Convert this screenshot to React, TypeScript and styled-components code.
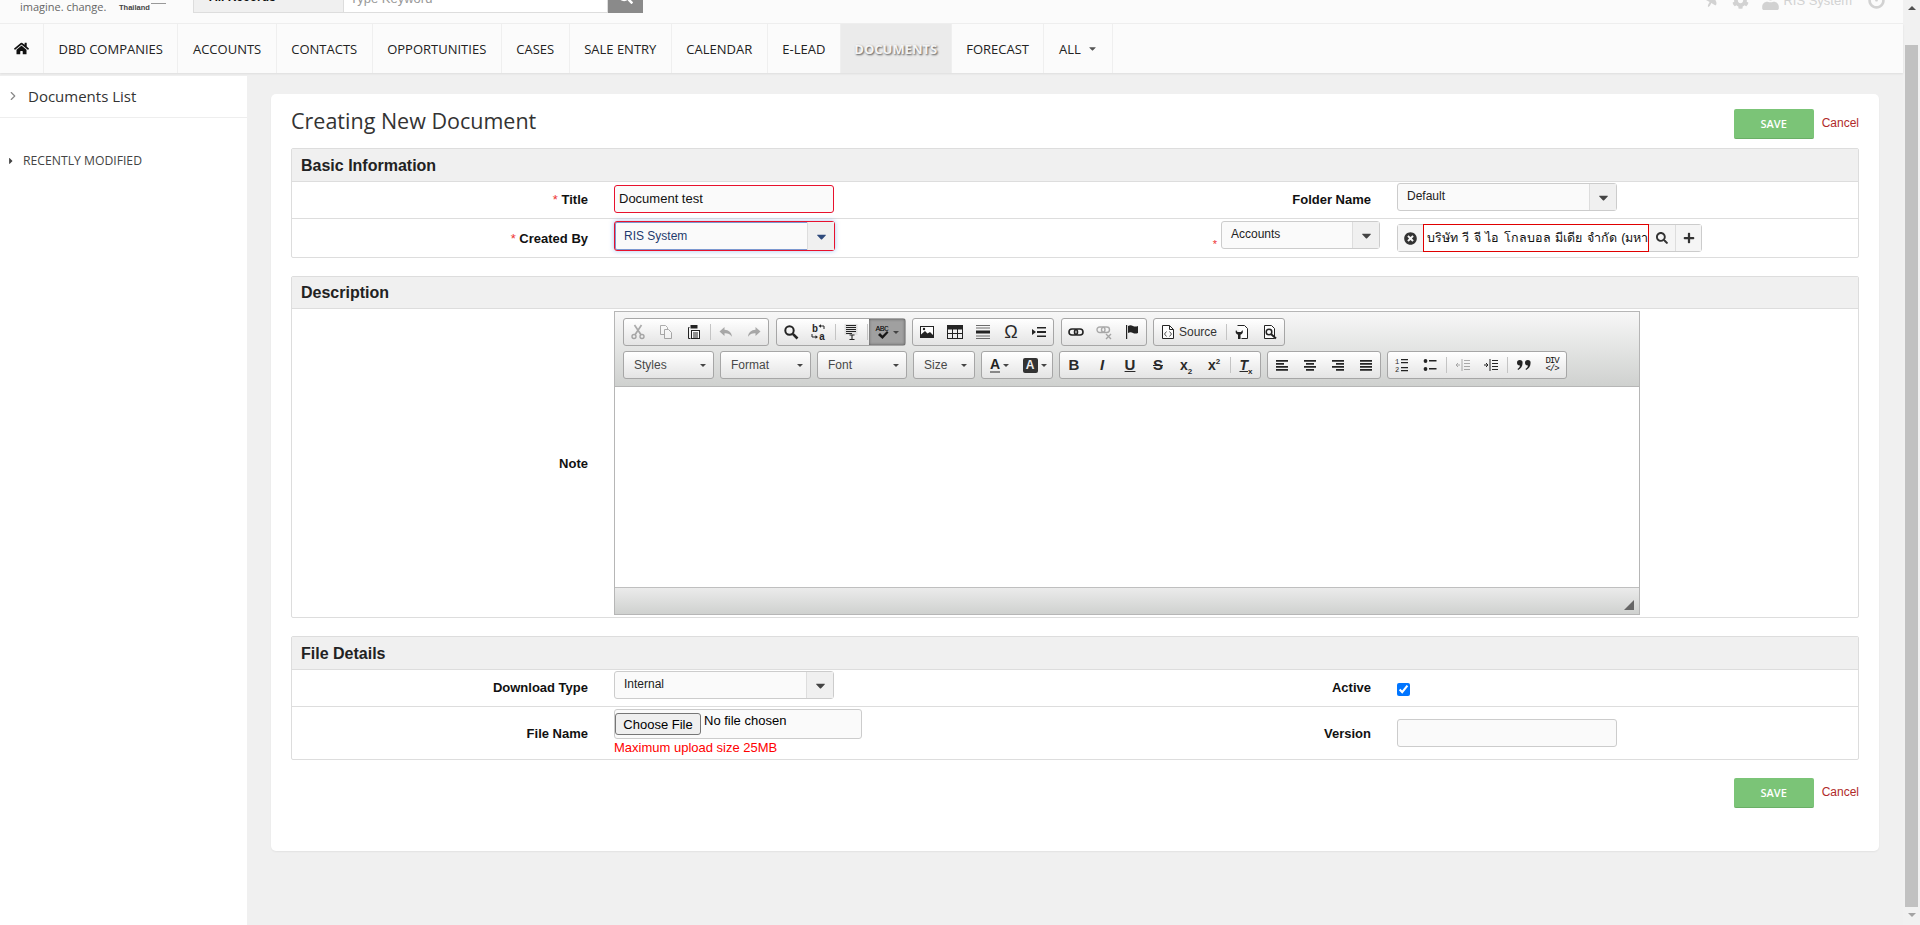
import React from "react";
import styled, { createGlobalStyle } from "styled-components";
import {
  FaCaretDown,
  FaCaretRight,
  FaCog,
  FaHome,
  FaPlus,
  FaPowerOff,
  FaSearch,
  FaThumbtack,
  FaTimesCircle,
  FaUser,
} from "react-icons/fa";
import { FiChevronRight } from "react-icons/fi";

const GlobalStyle = createGlobalStyle`
  html, body { margin: 0; padding: 0; height: 100%; overflow: hidden; }
  body { font-family: "Liberation Sans", Arial, sans-serif; background: #f0f0f0; color: #111; }
  * { box-sizing: border-box; }
`;

const navItems = [
  "DBD Companies",
  "Accounts",
  "Contacts",
  "Opportunities",
  "Cases",
  "Sale Entry",
  "Calendar",
  "E-Lead",
  "Documents",
  "Forecast",
];

// ckeditor toolbar icons, all on a 16px grid
const icons: any = {
  cut: (
    <g fill="none" stroke="#000" strokeWidth="1.4">
      <circle cx="4" cy="12.5" r="2" />
      <circle cx="12" cy="12.5" r="2" />
      <path d="M5 10.8 11.5 1M11 10.8 4.5 1" strokeWidth="1.7" />
    </g>
  ),
  copy: (
    <g fill="#fff" stroke="#000" strokeWidth="1">
      <path d="M2.5 1.5h5l2 2v7h-7z" />
      <path d="M6.5 5.5h4l3 3v6h-7z" />
    </g>
  ),
  paste: (
    <g fill="none" stroke="#000">
      <path d="M3.5 3.5h-1v11h2" strokeLinejoin="round" />
      <rect x="4.500" y="1" width="7" height="3.5" fill="#000" stroke="none" />
      <rect x="5.5" y="6.5" width="8" height="8" fill="#fff" />
      <path d="M7 9h5M7 11h5M7 13h5" />
    </g>
  ),
  undo: <path d="M6.5 3 1.5 7.5l5 4.5V9.2c3.2-.2 5.6.8 7.5 3.6-.4-4.3-3.2-6.8-7.5-7z" />,
  redo: <path d="M9.5 3l5 4.5-5 4.5V9.2c-3.2-.2-5.6.8-7.5 3.6.4-4.3 3.2-6.8 7.5-7z" />,
  find: (
    <g fill="none" stroke="#000">
      <circle cx="6.5" cy="6.5" r="4.2" strokeWidth="2" />
      <path d="M9.8 9.8 14.5 14.5" strokeWidth="2.6" />
    </g>
  ),
  replace: (
    <g>
      <text x="1" y="8" fontSize="10" fontWeight="700" fontFamily="Liberation Mono">b</text>
      <text x="8" y="15.5" fontSize="10" fontWeight="700" fontFamily="Liberation Mono">a</text>
      <path d="M9 2h4v3M1 10v3h4" fill="none" stroke="#000" />
      <path d="M7.5 2 10 .2v3.6zM7 13l-2.5-1.800v3.600z" />
    </g>
  ),
  selectAll: (
    <g>
      <path d="M1.5 0h13v11h-13z" fill="#ddd" />
      <path d="M3 1.5h10M3 3.5h10M3 5.5h10M3 7.5h10M3 9.5h6" stroke="#000" />
      <path d="M6.5 11h5M6.5 15.5h5M9 11v4.5" stroke="#000" strokeWidth="1.1" fill="none" />
    </g>
  ),
  image: (
    <g>
      <rect x="1.500" y="2.500" width="13" height="11" fill="#fff" stroke="#000" />
      <path d="M2 13V10.5L6 7l2.5 2.5L11 8l3 3v2z" />
      <circle cx="5" cy="5" r="1.2" />
    </g>
  ),
  table: (
    <g fill="none" stroke="#000">
      <rect x="0.5" y="1.5" width="15" height="13" />
      <path d="M0 2h16v3H0z" fill="#000" />
      <path d="M.5 9.5h15M5.5 5v9M10.5 5v9" />
    </g>
  ),
  hr: (
    <g>
      <path d="M1 1h14v1H1zM1 3.5h14v1H1zM1 11.5h14v1H1zM1 14h14v1H1z" fill="#555" />
      <path d="M1 6.5h14v3H1z" />
    </g>
  ),
  pagebreak: (
    <g>
      <path d="M1 5v6l4-3z" />
      <path d="M6 3h9v1.5H6zM6 7h9v2H6zM6 11.5h9V13H6z" />
    </g>
  ),
  link: (
    <g fill="none" stroke="#000" strokeWidth="1.6">
      <rect x="1" y="5" width="8.5" height="6" rx="3" />
      <rect x="6.5" y="5" width="8.5" height="6" rx="3" />
    </g>
  ),
  unlink: (
    <g fill="none" stroke="#000" strokeWidth="1.4">
      <rect x="1" y="3" width="8" height="5.5" rx="2.7" />
      <rect x="5.5" y="3" width="8" height="5.5" rx="2.7" />
      <path d="M10 10l5 5M15 10l-5 5" />
    </g>
  ),
  anchor: (
    <g>
      <path d="M2 1h1.2v14H2z" />
      <path d="M4 2c2-1 3.500-.7 5 0s3 .7 5 0v7c-2 .7-3.500.7-5 0s-3-1-5 0z" />
    </g>
  ),
  source: (
    <g>
      <path d="M2.500 1.500h7l4 4v9h-11z" fill="#fff" stroke="#000" />
      <path d="M9.500 1.500v4h4" fill="none" stroke="#000" />
      <path d="M6.500 7.500 4.500 10l2 2.500M9.500 7.500l2 2.500-2 2.500" fill="none" stroke="#333" />
    </g>
  ),
  templates: (
    <g>
      <path d="M3.500 1.500h7l3 3v10h-6" fill="#fff" stroke="#000" />
      <path d="M2 6c-1 2.500 0 4 2 4.800V15h2.500v-4.200c2-.8 3-2.300 2-4.800L7 8H3.500z" />
    </g>
  ),
  preview: (
    <g fill="none" stroke="#000">
      <path d="M2.500 1.500h7l3 3v10h-10z" fill="#fff" />
      <circle cx="7" cy="8" r="2.800" strokeWidth="1.500" />
      <path d="M9 10l5 4.500" strokeWidth="2" />
    </g>
  ),
  left: <path d="M2 3h12v1.700H2zM2 6h8v1.700H2zM2 9h12v1.700H2zM2 12h12v1.700H2z" />,
  center: <path d="M2 3h12v1.700H2zM4 6h8v1.700H4zM2 9h12v1.700H2zM4 12h8v1.700H4z" />,
  right: <path d="M2 3h12v1.700H2zM6 6h8v1.700H6zM2 9h12v1.700H2zM6 12h8v1.700H6z" />,
  justify: <path d="M2 3h12v1.700H2zM2 6h12v1.700H2zM2 9h12v1.700H2zM2 12h12v1.700H2z" />,
  numbered: (
    <g>
      <text x="1" y="7" fontSize="7" fontFamily="Liberation Mono">1</text>
      <text x="1" y="15" fontSize="7" fontFamily="Liberation Mono">2</text>
      <path d="M7 2h7v1.200H7zM7 5h7v1.200H7zM7 10h7v1.200H7zM7 13h7v1.200H7z" />
    </g>
  ),
  bulleted: (
    <g>
      <circle cx="3.500" cy="4" r="1.900" />
      <circle cx="3.500" cy="12" r="1.900" />
      <path d="M7 3h7.500v1.500H7zM7 11h7.500v1.500H7z" />
    </g>
  ),
  outdent: (
    <g>
      <path d="M7 2v12" stroke="#000" />
      <path d="M9 3h6v1H9zM9 6h6v1H9zM9 9h6v1H9zM9 12h6v1H9z" />
      <path d="M1 8h4M1 8l2-2M1 8l2 2" stroke="#000" fill="none" />
    </g>
  ),
  indent: (
    <g>
      <path d="M7 2v12" stroke="#000" />
      <path d="M9 3h6v1H9zM9 6h6v1H9zM9 9h6v1H9zM9 12h6v1H9z" />
      <path d="M1 8h4M5 8l-2-2M5 8l-2 2" stroke="#000" fill="none" />
    </g>
  ),
  quote: (
    <g>
      <path d="M1 5.800a2.800 2.800 0 1 1 5.600 0c0 3.500-1.800 6-4.500 7.200l-.6-1c1.500-.8 2.300-2 2.500-3.500A2.800 2.800 0 0 1 1 5.800z" />
      <path d="M9 5.800a2.800 2.800 0 1 1 5.600 0c0 3.500-1.800 6-4.500 7.200l-.6-1c1.500-.8 2.300-2 2.500-3.500A2.800 2.800 0 0 1 9 5.800z" />
    </g>
  ),
  check: <path d="M3 11l2-2 2.500 2.500L12 7l1.500 1.500L7.500 15z" />,
};

const Icon = ({ name, off }: { name: string; off?: boolean }) => (
  <svg width="16" height="16" viewBox="0 0 16 16" opacity={off ? 0.3 : 0.85}>
    {icons[name]}
  </svg>
);

const Btn = ({ name, off }: { name: string; off?: boolean }) => (
  <ToolBtn>
    <Icon name={name} off={off} />
  </ToolBtn>
);

const App = () => {
  return (
    <Page>
      <GlobalStyle />
      <Main>
        <TopBar>
          <Brand>
            <Slogan>imagine. change.</Slogan>
            <Country>Thailand</Country>
            <BrandDash />
          </Brand>
          <SearchBox>
            <SearchScope>
              All Records
              <FaCaretDown size={9} color="#777" />
            </SearchScope>
            <SearchInput>Type Keyword</SearchInput>
            <SearchButton>
              <FaSearch size={15} color="#fff" />
            </SearchButton>
          </SearchBox>
          <UserTools>
            <Pin>
              <FaThumbtack size={16} />
            </Pin>
            <FaCog size={17} />
            <FaUser size={19} />
            <UserName>RIS System</UserName>
            <FaPowerOff size={17} />
          </UserTools>
        </TopBar>

        <Nav>
          <NavHome>
            <FaHome size={15} color="#111" />
          </NavHome>
          {navItems.map((el) => (
            <NavItem key={el} $active={el === "Documents"}>
              {el}
            </NavItem>
          ))}
          <NavItem>
            All
            <FaCaretDown size={11} color="#555" />
          </NavItem>
        </Nav>

        <Body>
          <Sidebar>
            <SideHead>
              <FiChevronRight size={14} color="#888" />
              Documents List
            </SideHead>
            <SideSub>
              <FaCaretRight size={10} color="#444" />
              Recently Modified
            </SideSub>
          </Sidebar>

          <Content>
            <Card>
              <TitleRow>
                <PageTitle>Creating New Document</PageTitle>
                <Actions>
                  <SaveButton>Save</SaveButton>
                  <CancelLink>Cancel</CancelLink>
                </Actions>
              </TitleRow>

              <Section>
                <SectionHead>Basic Information</SectionHead>
                <Row $h={37}>
                  <Label $up>
                    <Star>*</Star> Title
                  </Label>
                  <Cell>
                    <TextInput $invalid $up={2} defaultValue="Document test" />
                  </Cell>
                  <Label $up>Folder Name</Label>
                  <Cell>
                    <Select $w={220} $up={6}>
                      <span>Default</span>
                      <SelectArrow>
                        <FaCaretDown size={15} color="#444" />
                      </SelectArrow>
                    </Select>
                  </Cell>
                </Row>
                <Row $h={38}>
                  <Label>
                    <Star>*</Star> Created By
                  </Label>
                  <Cell>
                    <Select $w={221} $up={4} $invalid>
                      <span>RIS System</span>
                      <SelectArrow>
                        <FaCaretDown size={15} color="#2f4a7c" />
                      </SelectArrow>
                    </Select>
                  </Cell>
                  <RelatedCell>
                    <SmallStar>*</SmallStar>
                    <Select $w={159} $up={6}>
                      <span>Accounts</span>
                      <SelectArrow>
                        <FaCaretDown size={15} color="#444" />
                      </SelectArrow>
                    </Select>
                  </RelatedCell>
                  <Cell>
                    <Lookup>
                      <LookupAddon>
                        <FaTimesCircle size={13} color="#333" />
                      </LookupAddon>
                      <LookupValue>บริษัท วี จี ไอ โกลบอล มีเดีย จำกัด (มหาชน)</LookupValue>
                      <LookupAddon>
                        <FaSearch size={12} color="#333" />
                      </LookupAddon>
                      <LookupAddon>
                        <FaPlus size={12} color="#333" />
                      </LookupAddon>
                    </Lookup>
                  </Cell>
                </Row>
              </Section>

              <Section>
                <SectionHead $h={32}>Description</SectionHead>
                <EditorRow>
                  <Label>Note</Label>
                  <Editor>
                    <Toolbar>
                      <ToolRow $gap={6.5}>
                        <ToolGroup>
                          <Btn name="cut" off />
                          <Btn name="copy" off />
                          <Btn name="paste" />
                          <ToolSep />
                          <Btn name="undo" off />
                          <Btn name="redo" off />
                        </ToolGroup>
                        <ToolGroup>
                          <Btn name="find" />
                          <Btn name="replace" />
                          <ToolSep />
                          <Btn name="selectAll" />
                          <ToolSep />
                          <SpellBtn>
                            <SpellMark>
                              <SpellText>ABC</SpellText>
                              <Icon name="check" />
                            </SpellMark>
                            <MiniCaret />
                          </SpellBtn>
                        </ToolGroup>
                        <ToolGroup>
                          <Btn name="image" />
                          <Btn name="table" />
                          <Btn name="hr" />
                          <ToolBtn>
                            <Glyph $size={18}>Ω</Glyph>
                          </ToolBtn>
                          <Btn name="pagebreak" />
                        </ToolGroup>
                        <ToolGroup>
                          <Btn name="link" />
                          <Btn name="unlink" off />
                          <Btn name="anchor" />
                        </ToolGroup>
                        <ToolGroup>
                          <SourceBtn>
                            <Icon name="source" />
                            Source
                          </SourceBtn>
                          <ToolSep />
                          <Btn name="templates" />
                          <Btn name="preview" />
                        </ToolGroup>
                      </ToolRow>
                      <ToolRow $gap={6}>
                        <Combo $w={91}>
                          Styles
                          <MiniCaret />
                        </Combo>
                        <Combo $w={91}>
                          Format
                          <MiniCaret />
                        </Combo>
                        <Combo $w={90}>
                          Font
                          <MiniCaret />
                        </Combo>
                        <Combo $w={62}>
                          Size
                          <MiniCaret />
                        </Combo>
                        <ToolGroup>
                          <ColorBtn>
                            <ColorA>A</ColorA>
                            <MiniCaret />
                          </ColorBtn>
                          <ColorBtn>
                            <ColorBg>A</ColorBg>
                            <MiniCaret />
                          </ColorBtn>
                        </ToolGroup>
                        <ToolGroup>
                          <ToolBtn>
                            <Glyph $size={15} $bold>B</Glyph>
                          </ToolBtn>
                          <ToolBtn>
                            <Glyph $size={15} $bold $italic>I</Glyph>
                          </ToolBtn>
                          <ToolBtn>
                            <Glyph $size={15} $bold $under>U</Glyph>
                          </ToolBtn>
                          <ToolBtn>
                            <Glyph $size={15} $bold $strike>S</Glyph>
                          </ToolBtn>
                          <ToolBtn>
                            <Glyph $bold>
                              x<sub>2</sub>
                            </Glyph>
                          </ToolBtn>
                          <ToolBtn>
                            <Glyph $bold>
                              x<sup>2</sup>
                            </Glyph>
                          </ToolBtn>
                          <ToolSep />
                          <ToolBtn>
                            <Glyph $bold>
                              <ClearT>T</ClearT>
                              <sub>x</sub>
                            </Glyph>
                          </ToolBtn>
                        </ToolGroup>
                        <ToolGroup>
                          <Btn name="left" />
                          <Btn name="center" />
                          <Btn name="right" />
                          <Btn name="justify" />
                        </ToolGroup>
                        <ToolGroup>
                          <Btn name="numbered" />
                          <Btn name="bulleted" />
                          <ToolSep $wide />
                          <Btn name="outdent" off />
                          <Btn name="indent" />
                          <ToolSep $wide />
                          <Btn name="quote" />
                          <ToolBtn>
                            <DivMark>
                              DIV
                              <br />
                              {"</>"}
                            </DivMark>
                          </ToolBtn>
                        </ToolGroup>
                      </ToolRow>
                    </Toolbar>
                    <EditorBody />
                    <EditorFoot>
                      <Resizer />
                    </EditorFoot>
                  </Editor>
                </EditorRow>
              </Section>

              <Section>
                <SectionHead>File Details</SectionHead>
                <Row $h={37}>
                  <Label $up>Download Type</Label>
                  <Cell>
                    <Select $w={220} $up={6}>
                      <span>Internal</span>
                      <SelectArrow>
                        <FaCaretDown size={15} color="#444" />
                      </SelectArrow>
                    </Select>
                  </Cell>
                  <Label $up>Active</Label>
                  <Cell>
                    <Checkbox type="checkbox" defaultChecked />
                  </Cell>
                </Row>
                <Row $h={52}>
                  <Label>File Name</Label>
                  <Cell>
                    <FileWrap>
                      <FileBox>
                        <FileButton>Choose File</FileButton>
                        <FileText>No file chosen</FileText>
                      </FileBox>
                      <Hint>Maximum upload size 25MB</Hint>
                    </FileWrap>
                  </Cell>
                  <Label>Version</Label>
                  <Cell>
                    <TextInput />
                  </Cell>
                </Row>
              </Section>

              <BottomActions>
                <SaveButton>Save</SaveButton>
                <CancelLink>Cancel</CancelLink>
              </BottomActions>
            </Card>
          </Content>
        </Body>
      </Main>

      <Scrollbar>
        <ScrollArrow $up />
        <ScrollThumb />
        <ScrollArrow />
      </Scrollbar>
    </Page>
  );
};

export default App;

const Page = styled.div`
  display: flex;
  width: 100%;
  height: 925px;
  overflow: hidden;
`;

const Main = styled.div`
  flex: 1;
  min-width: 0;
  display: flex;
  flex-direction: column;
`;

const TopBar = styled.div`
  height: 24px;
  flex: none;
  display: flex;
  align-items: flex-end;
  overflow: hidden;
  background: #fbfbfb;
  border-bottom: 1px solid #efefef;
  padding-bottom: 10px;
  position: relative;
`;

const Brand = styled.div`
  width: 193px;
  height: 14px;
  flex: none;
  display: flex;
  align-items: center;
  padding-left: 20px;
`;

const Slogan = styled.div`
  font-family: "Open Sans", sans-serif;
  font-size: 11px;
  color: #666;
  width: 99px;
  white-space: nowrap;
`;

const Country = styled.div`
  font-size: 7.5px;
  font-weight: 700;
  color: #444;
  width: 32px;
  margin-top: 2px;
`;

const BrandDash = styled.div`
  width: 15px;
  height: 1px;
  background: #999;
  margin-bottom: 5px;
`;

const SearchBox = styled.div`
  display: flex;
  height: 27px;
  width: 450px;
  flex: none;
`;

const SearchScope = styled.div`
  width: 151px;
  background: #f0f0f0;
  border: 1px solid #ddd;
  display: flex;
  align-items: center;
  justify-content: space-between;
  padding: 0 10px 5px 15px;
  font-size: 12px;
  font-weight: 700;
  color: #111;
`;

const SearchInput = styled.div`
  width: 264px;
  background: #fff;
  border: 1px solid #ddd;
  border-left: 0;
  display: flex;
  align-items: center;
  padding: 0 0 3px 6px;
  font-size: 13px;
  color: #999;
`;

const SearchButton = styled.div`
  width: 35px;
  background: #8a8a8a;
  display: flex;
  align-items: center;
  justify-content: center;
  padding-bottom: 6px;
`;

const UserTools = styled.div`
  margin-left: auto;
  height: 22px;
  display: flex;
  align-items: center;
  gap: 12px;
  color: #d2d2d2;
  padding-right: 18px;
  margin-bottom: 2px;
`;

const Pin = styled.div`
  display: flex;
  transform: rotate(30deg);
`;

const UserName = styled.span`
  font-size: 13px;
  margin-left: -9px;
  margin-right: 4px;
`;

const Nav = styled.div`
  height: 49px;
  flex: none;
  display: flex;
  background: #fbfbfb;
  box-shadow: 0 1px 2px rgba(0, 0, 0, 0.08);
  position: relative;
`;

const NavHome = styled.div`
  width: 44px;
  border-right: 1px solid #efefef;
  display: flex;
  align-items: center;
  justify-content: center;
`;

const NavItem = styled.div<{ $active?: boolean }>`
  display: flex;
  align-items: center;
  gap: 6px;
  padding: 0 ${(p) => (p.$active ? 13.5 : 14.5)}px;
  border-right: 1px solid #efefef;
  font-family: "Open Sans", sans-serif;
  font-size: 13px;
  font-weight: ${(p) => (p.$active ? 700 : 500)};
  text-transform: uppercase;
  color: ${(p) => (p.$active ? "#f4f4f4" : "#222")};
  background: ${(p) => (p.$active ? "#ebebeb" : "transparent")};
  text-shadow: ${(p) => (p.$active ? "1px 1px 2px rgba(0, 0, 0, 0.65)" : "none")};
`;

const Body = styled.div`
  flex: 1;
  min-height: 0;
  display: flex;
  padding-top: 3px;
`;

const Sidebar = styled.div`
  width: 247px;
  flex: none;
  background: #fff;
  font-family: "Open Sans", sans-serif;
`;

const SideHead = styled.div`
  height: 42px;
  display: flex;
  align-items: center;
  gap: 8px;
  padding: 0 0 1px 6px;
  border-bottom: 1px solid #eee;
  font-size: 15px;
  color: #333;
`;

const SideSub = styled.div`
  margin-top: 34px;
  display: flex;
  align-items: center;
  gap: 7px;
  padding-left: 6px;
  font-size: 12.2px;
  text-transform: uppercase;
  color: #444;
`;

const Content = styled.div`
  flex: 1;
  min-width: 0;
  padding: 18px 24px 0;
`;

const Card = styled.div`
  height: 757px;
  background: #fff;
  border-radius: 5px;
  box-shadow: 0 1px 2px rgba(0, 0, 0, 0.06);
  padding: 0 20px;
`;

const TitleRow = styled.div`
  height: 54px;
  display: flex;
  align-items: flex-start;
  justify-content: space-between;
`;

const PageTitle = styled.h1`
  margin: 13px 0 0;
  font-family: "Open Sans", sans-serif;
  font-size: 21.5px;
  line-height: 28px;
  font-weight: 400;
  color: #333;
`;

const Actions = styled.div`
  display: flex;
  gap: 8px;
  margin-top: 15px;
`;

const BottomActions = styled(Actions)`
  justify-content: flex-end;
  margin-top: 18px;
`;

const SaveButton = styled.div`
  width: 80px;
  height: 30px;
  background: #7bc477;
  border-bottom: 1px solid #6aaf66;
  border-radius: 2px;
  display: flex;
  align-items: center;
  justify-content: center;
  font-family: "Open Sans", sans-serif;
  font-size: 11px;
  font-weight: 600;
  text-transform: uppercase;
  color: #fff;
`;

const CancelLink = styled.div`
  font-size: 12px;
  line-height: 28px;
  color: #b02a2a;
`;

const Section = styled.div`
  border: 1px solid #ddd;
  border-radius: 2px;
  margin-bottom: 18px;
`;

const SectionHead = styled.div<{ $h?: number }>`
  height: ${(p) => p.$h || 33}px;
  background: #f0f0f0;
  border-bottom: 1px solid #ddd;
  display: flex;
  align-items: center;
  padding: 1px 0 0 9px;
  font-size: 16px;
  font-weight: 700;
  color: #222;
`;

const Row = styled.div<{ $h: number }>`
  height: ${(p) => p.$h}px;
  display: grid;
  grid-template-columns: 322px 460px 323px 1fr;
  align-items: center;
  border-bottom: 1px solid #ddd;

  &:last-child {
    border-bottom: 0;
  }
`;

const Label = styled.div<{ $up?: boolean }>`
  text-align: right;
  padding-right: 26px;
  padding-bottom: ${(p) => (p.$up ? 2 : 0)}px;
  font-size: 13px;
  font-weight: 700;
  color: #111;
`;

const Star = styled.span`
  color: #e33;
  font-weight: 400;
`;

const SmallStar = styled(Star)`
  font-size: 11px;
  line-height: 11px;
  margin: 12px 1px 0 0;
`;

const Cell = styled.div`
  display: flex;
  align-items: center;
`;

const RelatedCell = styled.div`
  display: flex;
  align-items: center;
  justify-content: flex-end;
  gap: 3px;
  padding-right: 17px;
`;

const TextInput = styled.input<{ $invalid?: boolean; $up?: number }>`
  width: 220px;
  height: 28px;
  margin-bottom: ${(p) => p.$up || 0}px;
  padding: 0 4px 2px;
  border: 1px solid ${(p) => (p.$invalid ? "#e8112d" : "#ccc")};
  border-radius: 3px;
  background: #fafafa;
  font-family: "Liberation Sans", Arial, sans-serif;
  font-size: 13px;
  color: #111;
  outline: none;
`;

const Select = styled.div<{ $w: number; $up?: number; $invalid?: boolean }>`
  width: ${(p) => p.$w}px;
  height: ${(p) => (p.$invalid ? 30 : 28)}px;
  margin-bottom: ${(p) => p.$up || 0}px;
  display: flex;
  align-items: stretch;
  justify-content: space-between;
  border: 1px solid ${(p) => (p.$invalid ? "#e8112d" : "#ccc")};
  border-radius: 3px;
  background: #fafafa;
  font-size: 12px;
  color: ${(p) => (p.$invalid ? "#1f3a6e" : "#222")};
  box-shadow: ${(p) =>
    p.$invalid ? "inset 0 0 0 1px rgba(70, 110, 190, 0.7), 0 0 5px rgba(80, 140, 230, 0.5)" : "none"};

  & > span {
    padding: ${(p) => (p.$invalid ? "7px 0 0 9px" : "5px 0 0 9px")};
  }
`;

const SelectArrow = styled.div`
  width: 27px;
  background: #f0f0f0;
  border-left: 1px solid #ddd;
  display: flex;
  align-items: center;
  justify-content: center;
`;

const Lookup = styled.div`
  height: 28px;
  display: flex;
  border: 1px solid #ccc;
  border-radius: 3px;
`;

const LookupAddon = styled.div`
  width: 26px;
  background: #f5f5f5;
  display: flex;
  align-items: center;
  justify-content: center;

  &:first-child {
    width: 25px;
  }

  &:last-child {
    border-left: 1px solid #ddd;
  }
`;

const LookupValue = styled.div`
  width: 226px;
  margin: -1px 0;
  padding: 0 3px;
  line-height: 26px;
  border: 1px solid #e00000;
  background: #fff;
  overflow: hidden;
  white-space: nowrap;
  font-family: "Liberation Sans", "Noto Sans", sans-serif;
  font-size: 12.5px;
  word-spacing: 1px;
  color: #111;
`;

const EditorRow = styled.div`
  height: 308px;
  display: grid;
  grid-template-columns: 322px 1fr;
  align-items: center;
`;

const Editor = styled.div`
  width: 1026px;
  height: 304px;
  display: flex;
  flex-direction: column;
  border: 1px solid #b6b6b6;
`;

const Toolbar = styled.div`
  height: 75px;
  flex: none;
  padding: 6px 0 0 8px;
  background: linear-gradient(#f7f7f7, #cfd1cf);
  border-bottom: 1px solid #b6b6b6;
`;

const ToolRow = styled.div<{ $gap: number }>`
  display: flex;
  gap: ${(p) => p.$gap}px;
  height: 28px;
  margin-bottom: 5px;
`;

const ToolGroup = styled.div`
  display: flex;
  align-items: stretch;
  height: 28px;
  padding: 0;
  border: 1px solid #a6a6a6;
  border-radius: 3px;
  background: linear-gradient(#fff, #e4e4e4);
`;

const ToolBtn = styled.div`
  width: 28px;
  display: flex;
  align-items: center;
  justify-content: center;
`;

const SpellBtn = styled.div`
  width: 36px;
  display: flex;
  align-items: center;
  justify-content: center;
  gap: 2px;
  background: #a0a0a0;
  box-shadow: inset 0 0 3px rgba(0, 0, 0, 0.5);
`;

const SpellMark = styled.div`
  position: relative;
  width: 16px;
  height: 16px;
`;

const SpellText = styled.span`
  position: absolute;
  top: 0;
  left: 1px;
  z-index: 1;
  font-family: "Liberation Mono", monospace;
  font-size: 8px;
  line-height: 9px;
  letter-spacing: -0.6px;
  color: #000;
`;

const SourceBtn = styled.div`
  width: 70px;
  display: flex;
  align-items: center;
  gap: 3px;
  padding-left: 6px;
  font-size: 12px;
  color: #333;
`;

const ToolSep = styled.div<{ $wide?: boolean }>`
  width: 1px;
  margin: ${(p) => (p.$wide ? "5px 2px" : "5px 1px 5px 2px")};
  background: #c4c4c4;
`;

const Glyph = styled.span<{
  $size?: number;
  $bold?: boolean;
  $italic?: boolean;
  $under?: boolean;
  $strike?: boolean;
}>`
  font-family: "Liberation Sans", Arial, sans-serif;
  font-size: ${(p) => p.$size || 14}px;
  line-height: 16px;
  color: #2a2a2a;
  font-weight: ${(p) => (p.$bold ? 700 : 400)};
  font-style: ${(p) => (p.$italic ? "italic" : "normal")};
  text-decoration: ${(p) => (p.$under ? "underline" : p.$strike ? "line-through" : "none")};

  & sub,
  & sup {
    font-size: 8px;
    line-height: 0;
  }
`;

const ClearT = styled.span`
  font-style: italic;
  text-decoration: underline;
`;

const DivMark = styled.span`
  font-family: "Liberation Mono", monospace;
  font-size: 9px;
  line-height: 8px;
  font-weight: 400;
  text-align: center;
  letter-spacing: -1px;
  color: #111;
`;

const MiniCaret = styled.i`
  width: 0;
  height: 0;
  border: 3px solid transparent;
  border-top-color: #444;
  border-bottom: 0;
`;

const Combo = styled.div<{ $w: number }>`
  width: ${(p) => p.$w}px;
  display: flex;
  align-items: center;
  justify-content: space-between;
  padding: 0 7px 0 10px;
  border: 1px solid #a6a6a6;
  border-radius: 3px;
  background: linear-gradient(#fff, #e4e4e4);
  font-size: 12px;
  color: #484848;
`;

const ColorBtn = styled.div`
  width: 35px;
  display: flex;
  align-items: center;
  justify-content: center;
  gap: 3px;
`;

const ColorA = styled.span`
  font-size: 14px;
  font-weight: 700;
  line-height: 14px;
  color: #222;
  border-bottom: 2px solid #888;
`;

const ColorBg = styled.span`
  width: 15px;
  height: 15px;
  border-radius: 2px;
  background: #333;
  font-size: 12px;
  font-weight: 700;
  line-height: 15px;
  text-align: center;
  color: #eee;
`;

const EditorBody = styled.div`
  flex: 1;
  background: #fff;
`;

const EditorFoot = styled.div`
  height: 27px;
  flex: none;
  display: flex;
  justify-content: flex-end;
  align-items: flex-end;
  padding: 0 5px 4px 0;
  background: linear-gradient(#ebebeb, #cfd1cf);
  border-top: 1px solid #bfbfbf;
`;

const Resizer = styled.div`
  width: 0;
  height: 0;
  border-style: solid;
  border-width: 0 0 10px 10px;
  border-color: transparent transparent #666 transparent;
`;

const Checkbox = styled.input`
  width: 13px;
  height: 13px;
  margin: 3px 0 0;
  accent-color: #0075ff;
`;

const FileWrap = styled.div`
  display: flex;
  flex-direction: column;
  gap: 2px;
  margin-bottom: 2px;
`;

const FileBox = styled.div`
  width: 248px;
  height: 30px;
  display: flex;
  align-items: flex-start;
  padding: 3px 0;
  border: 1px solid #ccc;
  border-radius: 3px;
  background: #fafafa;
`;

const FileButton = styled.button`
  width: 86px;
  height: 22px;
  padding: 0;
  border: 1px solid #767676;
  border-radius: 3px;
  background: #efefef;
  font-family: "Liberation Sans", Arial, sans-serif;
  font-size: 13px;
  color: #000;
`;

const FileText = styled.span`
  margin-left: 3px;
  font-size: 13px;
  line-height: 15px;
  color: #000;
`;

const Hint = styled.div`
  font-size: 13px;
  line-height: 14px;
  color: #f00;
`;

const Scrollbar = styled.div`
  width: 17px;
  flex: none;
  display: flex;
  flex-direction: column;
  align-items: center;
  background: #f1f1f1;
`;

const ScrollArrow = styled.div<{ $up?: boolean }>`
  width: 0;
  height: 0;
  margin: ${(p) => (p.$up ? "6px 0 0" : "0 0 6px")};
  border-left: 4px solid transparent;
  border-right: 4px solid transparent;
  border-bottom: ${(p) => (p.$up ? "4px solid #505050" : "0")};
  border-top: ${(p) => (p.$up ? "0" : "4px solid #a3a3a3")};
`;

const ScrollThumb = styled.div`
  width: 13px;
  height: 862px;
  margin: 35px 0 6px;
  background: #c1c1c1;
`;
